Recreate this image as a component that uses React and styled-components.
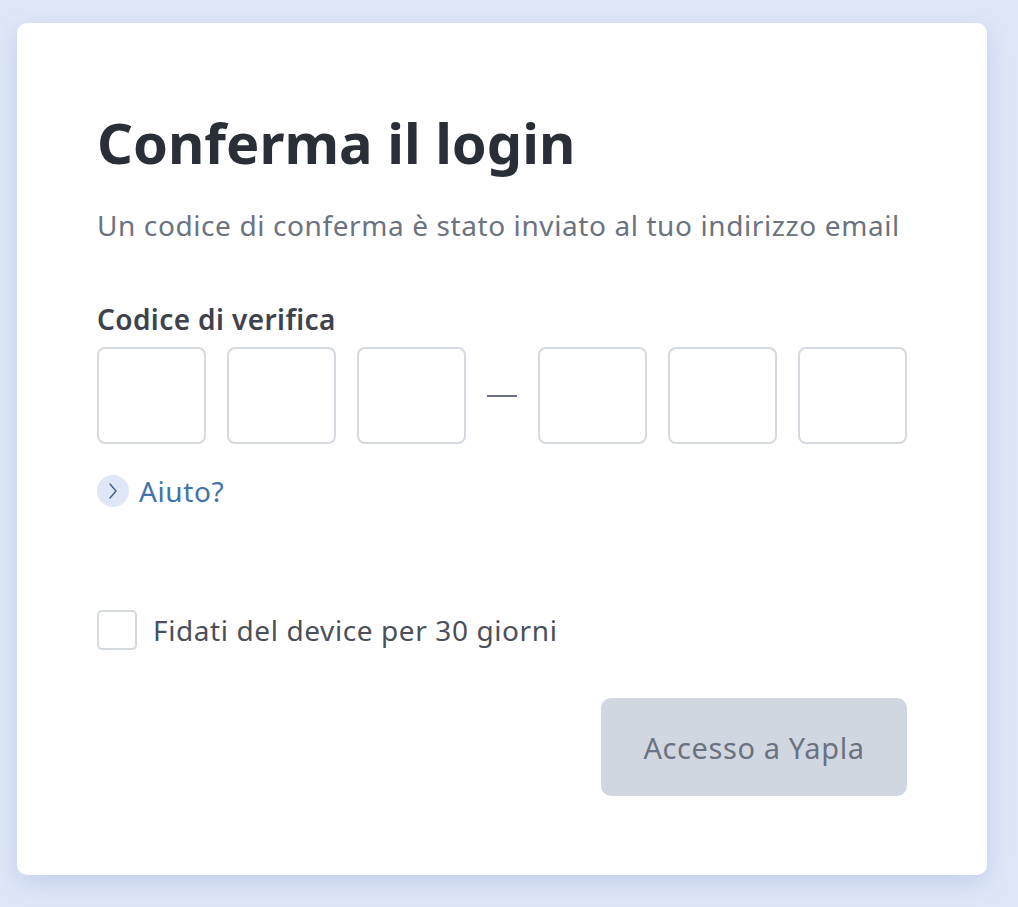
import React, { useState } from "react";
import styled, { createGlobalStyle } from "styled-components";

const GlobalStyle = createGlobalStyle`
  html, body {
    margin: 0;
    padding: 0;
    background: #dfe7f7;
  }
  body {
    font-family: "Noto Sans", "Lato", sans-serif;
  }
`;

const Page = styled.div`
  min-height: 907px;
  padding: 23px 31px 32px 17px;
  box-sizing: border-box;
`;

const Card = styled.div`
  background: #ffffff;
  border-radius: 10px;
  box-shadow: 0 8px 24px rgba(160, 180, 225, 0.45);
  height: 852px;
  box-sizing: border-box;
  padding: 85px 80px 0 80px;
  display: flex;
  flex-direction: column;
`;

const Title = styled.h1`
  margin: 0;
  font-size: 56px;
  line-height: 68px;
  font-weight: 700;
  color: #2a2f37;
`;

const Subtitle = styled.p`
  margin: 31px 0 0;
  font-size: 28px;
  line-height: 36px;
  letter-spacing: 0.6px;
  color: #6b7280;
`;

const Label = styled.div`
  margin-top: 59px;
  font-size: 28px;
  line-height: 34px;
  letter-spacing: 0.4px;
  font-weight: 600;
  color: #3d424c;
`;

const CodeRow = styled.div`
  display: flex;
  align-items: center;
  gap: 21px;
  margin-top: 11px;
`;

const CodeBox = styled.input`
  width: 109px;
  height: 97px;
  box-sizing: border-box;
  border: 2px solid #d5d9e0;
  border-radius: 8px;
  background: #fff;
  font-family: inherit;
  font-size: 40px;
  text-align: center;
  color: #2a2f37;
  outline: none;
`;

const Dash = styled.span`
  width: 31px;
  height: 2px;
  background: #6b7280;
`;

const HelpLink = styled.a`
  display: flex;
  align-items: center;
  gap: 10px;
  margin-top: 30px;
  font-size: 28px;
  line-height: 34px;
  letter-spacing: 0.6px;
  color: #3f73a9;
  text-decoration: none;
  cursor: pointer;
  align-self: flex-start;
`;

const HelpIcon = styled.span`
  width: 32px;
  height: 32px;
  border-radius: 50%;
  background: #dfe6f5;
  display: flex;
  align-items: center;
  justify-content: center;
`;

const CheckRow = styled.label`
  display: flex;
  align-items: center;
  gap: 16px;
  margin-top: 102px;
  font-size: 28px;
  line-height: 34px;
  letter-spacing: 0.6px;
  color: #4a4f59;
  cursor: pointer;
`;

const CheckBox = styled.span`
  width: 40px;
  height: 40px;
  box-sizing: border-box;
  border: 2px solid #d5d9e0;
  border-radius: 5px;
  background: ${({ checked }) => (checked ? "#3f73a9" : "#fff")};
`;

const Actions = styled.div`
  display: flex;
  justify-content: flex-end;
  margin-top: 48px;
`;

const SubmitButton = styled.button`
  width: 306px;
  height: 98px;
  border: none;
  border-radius: 10px;
  background: #d1d7e0;
  color: #6b7280;
  font-family: inherit;
  font-size: 29px;
  letter-spacing: 0.6px;
  cursor: not-allowed;
`;

const Chevron = () => (
  <svg width="12" height="18" viewBox="0 0 12 18" fill="none">
    <path d="M3 2 L9 9 L3 16" stroke="#3f5f8f" strokeWidth="1.4" strokeLinecap="round" strokeLinejoin="round" />
  </svg>
);

const App = () => {
  const [trust, setTrust] = useState(false);

  return (
    <>
      <GlobalStyle />
      <Page>
        <Card>
          <Title>Conferma il login</Title>
          <Subtitle>Un codice di conferma è stato inviato al tuo indirizzo email</Subtitle>
          <Label>Codice di verifica</Label>
          <CodeRow>
            <CodeBox maxLength={1} />
            <CodeBox maxLength={1} />
            <CodeBox maxLength={1} />
            <Dash />
            <CodeBox maxLength={1} />
            <CodeBox maxLength={1} />
            <CodeBox maxLength={1} />
          </CodeRow>
          <HelpLink>
            <HelpIcon>
              <Chevron />
            </HelpIcon>
            Aiuto?
          </HelpLink>
          <CheckRow onClick={() => setTrust(!trust)}>
            <CheckBox checked={trust} />
            Fidati del device per 30 giorni
          </CheckRow>
          <Actions>
            <SubmitButton disabled>Accesso a Yapla</SubmitButton>
          </Actions>
        </Card>
      </Page>
    </>
  );
};

export default App;
